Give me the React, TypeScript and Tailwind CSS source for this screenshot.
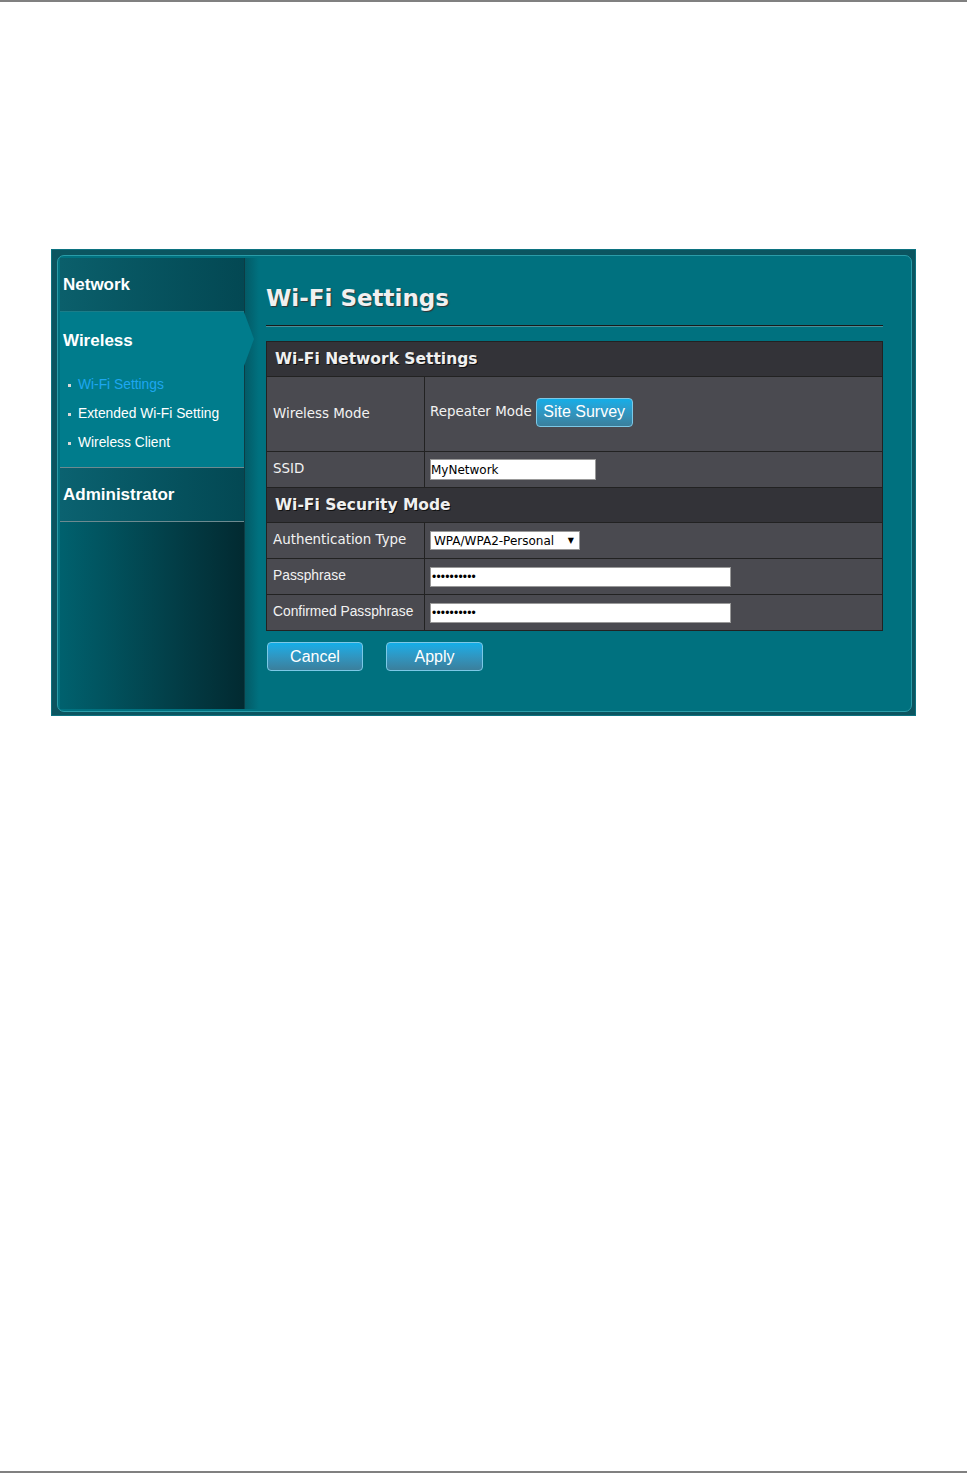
import { useState } from "react";

const verdana = { fontFamily: '"DejaVu Sans", Verdana, sans-serif' };
const arial = { fontFamily: '"Liberation Sans", Arial, sans-serif' };

function SubItem({ label, active }: { label: string; active?: boolean }) {
  return (
    <li className="flex items-center h-[29px] pl-[8px]">
      <span className="w-[3px] h-[3px] bg-[#d8d8d8] mr-[7px]" />
      <span className={`text-[13.8px] ${active ? "text-[#1ea7f0]" : "text-white"}`} style={arial}>
        {label}
      </span>
    </li>
  );
}

function Row({ label, children, tall, labelFont = "verdana" }: { label: string; children: React.ReactNode; tall?: boolean; labelFont?: string }) {
  return (
    <div className={`flex border-t border-[#222] ${tall ? "h-[75px]" : "h-[36px]"}`}>
      <div
        className="w-[158px] shrink-0 flex items-center pl-[6px] border-r border-[#222] bg-[#4a4a50] text-[#f2f2f2]"
        style={labelFont === "arial" ? { ...arial, fontSize: 13.8 } : { ...verdana, fontSize: 13.4 }}
      >
        {label}
      </div>
      <div className="flex-1 flex items-center pl-[5px] bg-[#4a4a50]">{children}</div>
    </div>
  );
}

function Header({ title }: { title: string }) {
  return (
    <div className="h-[35px] flex items-center pl-[8px] pt-[2px] bg-[#333338] border-t border-[#222]">
      <span className="text-[15.5px] font-bold text-[#f0f0f0] [text-shadow:1px_1px_0_#111]" style={verdana}>
        {title}
      </span>
    </div>
  );
}

function BlueButton({ label, w }: { label: string; w: string }) {
  return (
    <button
      type="button"
      className={`${w} h-[29px] rounded-[4px] border border-[#7cc8e6] bg-gradient-to-b from-[#12aee8] to-[#3a7f9c] text-white text-[16px] leading-none`}
      style={arial}
    >
      {label}
    </button>
  );
}

function Dots() {
  return (
    <div className="w-[301px] h-[20px] bg-white border border-[#999] flex items-center pl-[1px] text-[12px] text-black tracking-[0.2px]" style={arial}>
      ••••••••••
    </div>
  );
}

export default function App() {
  const [ssid, setSsid] = useState("MyNetwork");

  return (
    <div className="w-[967px] h-[1473px] bg-white border-t-2 border-b-2 border-[#808080]">
      <div className="pt-[247px] pl-[51px]">
        {/* outer frame */}
        <div className="w-[865px] h-[467px] bg-[#0b5560] border border-[#0c7280] pt-[5px] pl-[5px] pr-[3px] pb-[3px]">
          <div className="h-full rounded-[7px] border border-[#2a9ca8] bg-[#00717f] p-[2px] flex">
            {/* sidebar */}
            <aside className="w-[185px] shrink-0 flex flex-col border-r border-[#0d3c44]">
              <div className="h-[54px] flex items-center pl-[3px] bg-gradient-to-r from-[#0b5f6b] to-[#034853] border-b border-[#1b7d89]">
                <span className="text-[17px] font-bold text-white" style={arial}>Network</span>
              </div>
              <div className="relative h-[155px] bg-[#007c8c] pt-[15px]">
                <div className="pl-[3px] h-[28px] flex items-center">
                  <span className="text-[17px] font-bold text-white" style={arial}>Wireless</span>
                </div>
                <ul className="mt-[16px]">
                  <SubItem label="Wi-Fi Settings" active />
                  <SubItem label="Extended Wi-Fi Setting" />
                  <SubItem label="Wireless Client" />
                </ul>
                <div className="absolute right-[-10px] top-0 w-0 h-0 border-y-[27px] border-y-transparent border-l-[10px] border-l-[#007c8c]" />
              </div>
              <div className="h-[55px] flex items-center pl-[3px] bg-gradient-to-r from-[#0b6270] to-[#034853] border-t border-[#6c8a90] border-b border-[#1b8591]">
                <span className="text-[17px] font-bold text-white" style={arial}>Administrator</span>
              </div>
              <div className="flex-1 bg-gradient-to-r from-[#00616e] to-[#022a31]" />
            </aside>

            {/* main */}
            <main className="flex-1 pl-[21px] pr-[26px] bg-[linear-gradient(to_right,#035a66_0px,#00717f_14px)]">
              <h1
                className="mt-[21px] h-[38px] flex items-center text-[23px] font-bold text-[#f0f0f0] [text-shadow:1px_1px_1px_#333]"
                style={verdana}
              >
                Wi-Fi Settings
              </h1>
              <div className="mt-[8px] h-[2px] bg-[#1a1a1a] border-b border-[#4a8f98]" />

              <div className="mt-[14px] border border-[#222] border-t-0">
                <Header title="Wi-Fi Network Settings" />
                <Row label="Wireless Mode" tall>
                  <div className="flex items-center -mt-[4px]">
                    <span className="text-[13.4px] text-[#f2f2f2] mr-[4px]" style={verdana}>Repeater Mode</span>
                    <BlueButton label="Site Survey" w="w-[97px]" />
                  </div>
                </Row>
                <Row label="SSID">
                  <input
                    value={ssid}
                    onChange={(e) => setSsid(e.target.value)}
                    className="w-[166px] h-[21px] bg-white border border-[#999] px-0 text-[12px] text-black outline-none"
                    style={verdana}
                  />
                </Row>
                <Header title="Wi-Fi Security Mode" />
                <Row label="Authentication Type">
                  <div className="w-[150px] h-[19px] bg-white border border-[#999] flex items-center pl-[3px] pr-[5px] text-[12px] text-black" style={verdana}>
                    <span className="flex-1">WPA/WPA2-Personal</span>
                    <span className="text-[8px]">▼</span>
                  </div>
                </Row>
                <Row label="Passphrase" labelFont="arial">
                  <Dots />
                </Row>
                <Row label="Confirmed Passphrase" labelFont="arial">
                  <Dots />
                </Row>
              </div>

              <div className="mt-[11px] flex gap-[23px] pl-[1px]">
                <BlueButton label="Cancel" w="w-[96px]" />
                <BlueButton label="Apply" w="w-[97px]" />
              </div>
            </main>
          </div>
        </div>
      </div>
    </div>
  );
}
